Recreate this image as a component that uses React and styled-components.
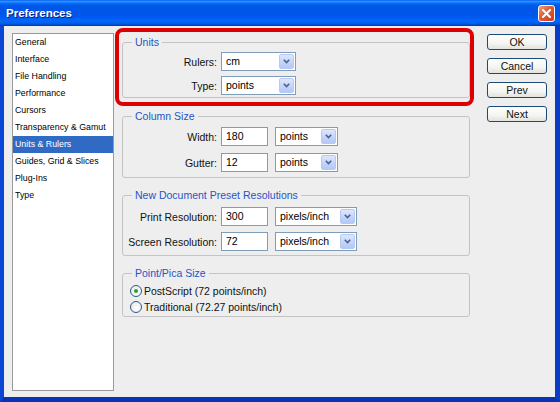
import styled, { createGlobalStyle } from 'styled-components';

const GlobalStyle = createGlobalStyle`
  html, body {
    margin: 0;
    padding: 0;
    background: #ffffff;
  }
  body {
    font-family: "Liberation Sans", Arial, sans-serif;
  }
`;

const Window = styled.div`
  width: 560px;
  height: 402px;
  display: flex;
  flex-direction: column;
  overflow: hidden;
`;

const TitleBar = styled.div`
  height: 26px;
  flex-shrink: 0;
  display: flex;
  align-items: center;
  justify-content: space-between;
  padding: 0 5px 0 6px;
  background: linear-gradient(
    to bottom,
    #0058ee 0%,
    #3593ff 5%,
    #1580ff 9%,
    #0465f2 15%,
    #0057e5 24%,
    #0055eb 56%,
    #005bf5 68%,
    #0367fb 80%,
    #0060ec 88%,
    #0050d2 94%,
    #003a9e 100%
  );
`;

const Title = styled.span`
  color: #ffffff;
  font-weight: bold;
  font-size: 11.5px;
  text-shadow: 1px 1px 0 #0a1f8f;
`;

const CloseButton = styled.div`
  width: 17px;
  height: 17px;
  box-sizing: border-box;
  border: 1px solid #ffffff;
  border-radius: 3px;
  background: linear-gradient(135deg, #f0a080 0%, #e2603a 40%, #cf3b17 100%);
  display: flex;
  align-items: center;
  justify-content: center;
`;

const Frame = styled.div`
  flex: 1;
  display: flex;
  border-left: 4px solid #0b47d6;
  border-right: 5px solid #0a3cc4;
  border-bottom: 5px solid #0833b4;
`;

const Body = styled.div`
  flex: 1;
  display: flex;
  align-items: flex-start;
  padding: 0 8px 6px 8px;
  background: #eeeeee;
`;

const Sidebar = styled.ul`
  list-style: none;
  margin: 7px 0 0 0;
  padding: 0;
  width: 102px;
  box-sizing: border-box;
  align-self: stretch;
  background: #ffffff;
  border: 1px solid #9a9a9a;
`;

const Item = styled.li`
  height: 17px;
  line-height: 17px;
  padding-left: 2px;
  font-size: 8.8px;
  white-space: nowrap;
  color: ${p => (p.$active ? '#ffffff' : '#000000')};
  background: ${p => (p.$active ? '#316ac5' : 'transparent')};
`;

const Main = styled.div`
  width: 348px;
  margin: 2px 0 0 8px;
  display: flex;
  flex-direction: column;
  gap: 11px;
`;

const Highlight = styled.div`
  margin: 0 -4px -7px -7px;
  padding: 4px 0 4px 3px;
  border: 4px solid #dc0000;
  border-radius: 8px;
`;

const Group = styled.fieldset`
  margin: 0;
  padding: 0;
  min-width: 0;
  border: 1px solid #c3c3c3;
  border-radius: 3px;
`;

const Legend = styled.legend`
  margin-left: 9px;
  padding: 0 3px;
  font-size: 10.5px;
  line-height: 12px;
  color: #1f55c8;
`;

const Rows = styled.div`
  display: flex;
  flex-direction: column;
  gap: ${p => p.$gap}px;
  padding: ${p => p.$pt}px 0 ${p => p.$pb}px 0;
`;

const Row = styled.div`
  display: flex;
  align-items: center;
  height: 19px;
`;

const Label = styled.span`
  width: 94px;
  padding-right: 4px;
  text-align: right;
  font-size: 10.5px;
  color: #111111;
  white-space: nowrap;
`;

const TextField = styled.div`
  width: 47px;
  height: 19px;
  box-sizing: border-box;
  border: 1px solid #7f9db9;
  background: #ffffff;
  padding-left: 4px;
  font-size: 10.5px;
  line-height: 17px;
  color: #000000;
`;

const SelectBox = styled.div`
  width: ${p => p.$w}px;
  height: 19px;
  box-sizing: border-box;
  margin-left: ${p => p.$ml || 0}px;
  border: 1px solid #7f9db9;
  background: #ffffff;
  display: flex;
  align-items: stretch;
  padding: 1px;
`;

const SelectValue = styled.span`
  flex: 1;
  padding-left: 3px;
  font-size: 10.5px;
  line-height: 15px;
  color: #000000;
  white-space: nowrap;
`;

const DropButton = styled.span`
  width: 15px;
  box-sizing: border-box;
  border: 1px solid #b7c9f3;
  border-radius: 2px;
  background: linear-gradient(to bottom, #dde7fd 0%, #c3d4fb 55%, #b4c8f6 100%);
  display: flex;
  align-items: center;
  justify-content: center;
`;

const RadioRow = styled.label`
  display: flex;
  align-items: center;
  height: 16px;
  padding-left: 7px;
  gap: 2px;
  font-size: 10.5px;
  color: #111111;
`;

const RadioCircle = styled.span`
  width: 12px;
  height: 12px;
  box-sizing: border-box;
  border-radius: 50%;
  border: 1px solid #2d5a8a;
  background: radial-gradient(circle at 60% 60%, #ffffff 0%, #ececec 70%, #d8d8d8 100%);
  display: flex;
  align-items: center;
  justify-content: center;
  &::after {
    content: '';
    width: 4px;
    height: 4px;
    border-radius: 50%;
    background: #22a52a;
    display: ${p => (p.$checked ? 'block' : 'none')};
  }
`;

const Buttons = styled.div`
  margin: 8px 0 0 17px;
  display: flex;
  flex-direction: column;
  gap: 8px;
`;

const Button = styled.div`
  width: 60px;
  height: 16px;
  box-sizing: border-box;
  border: 1px solid #1c4a78;
  border-radius: 3px;
  background: linear-gradient(to bottom, #ffffff 0%, #f4f4f0 60%, #e3e2dc 100%);
  font-size: 10.5px;
  line-height: 14px;
  text-align: center;
  color: #111111;
`;

const Chevron = () => (
  <svg width="7" height="5" viewBox="0 0 7 5">
    <path d="M0.8 0.8 L3.5 3.6 L6.2 0.8" fill="none" stroke="#4d6185" strokeWidth="1.6" />
  </svg>
);

const Select = ({ value, width, ml }) => (
  <SelectBox $w={width} $ml={ml}>
    <SelectValue>{value}</SelectValue>
    <DropButton>
      <Chevron />
    </DropButton>
  </SelectBox>
);

const sections = [
  'General',
  'Interface',
  'File Handling',
  'Performance',
  'Cursors',
  'Transparency & Gamut',
  'Units & Rulers',
  'Guides, Grid & Slices',
  'Plug-Ins',
  'Type',
];

const App = () => (
  <>
    <GlobalStyle />
    <Window>
      <TitleBar>
        <Title>Preferences</Title>
        <CloseButton>
          <svg width="9" height="9" viewBox="0 0 9 9">
            <path d="M1 1 L8 8 M8 1 L1 8" stroke="#ffffff" strokeWidth="2" strokeLinecap="square" />
          </svg>
        </CloseButton>
      </TitleBar>
      <Frame>
        <Body>
          <Sidebar>
            {sections.map(s => (
              <Item key={s} $active={s === 'Units & Rulers'}>
                {s}
              </Item>
            ))}
          </Sidebar>

          <Main>
            <Highlight>
              <Group>
                <Legend>Units</Legend>
                <Rows $gap={5} $pt={4} $pb={2}>
                  <Row>
                    <Label>Rulers:</Label>
                    <Select value="cm" width={75} />
                  </Row>
                  <Row>
                    <Label>Type:</Label>
                    <Select value="points" width={75} />
                  </Row>
                </Rows>
              </Group>
            </Highlight>

            <Group>
              <Legend>Column Size</Legend>
              <Rows $gap={7} $pt={5} $pb={5}>
                <Row>
                  <Label>Width:</Label>
                  <TextField>180</TextField>
                  <Select value="points" width={63} ml={7} />
                </Row>
                <Row>
                  <Label>Gutter:</Label>
                  <TextField>12</TextField>
                  <Select value="points" width={63} ml={7} />
                </Row>
              </Rows>
            </Group>

            <Group>
              <Legend>New Document Preset Resolutions</Legend>
              <Rows $gap={6} $pt={6} $pb={4}>
                <Row>
                  <Label>Print Resolution:</Label>
                  <TextField>300</TextField>
                  <Select value="pixels/inch" width={82} ml={7} />
                </Row>
                <Row>
                  <Label>Screen Resolution:</Label>
                  <TextField>72</TextField>
                  <Select value="pixels/inch" width={82} ml={7} />
                </Row>
              </Rows>
            </Group>

            <Group>
              <Legend>Point/Pica Size</Legend>
              <Rows $gap={0} $pt={4} $pb={1}>
                <RadioRow>
                  <RadioCircle $checked />
                  PostScript (72 points/inch)
                </RadioRow>
                <RadioRow>
                  <RadioCircle />
                  Traditional (72.27 points/inch)
                </RadioRow>
              </Rows>
            </Group>
          </Main>

          <Buttons>
            <Button>OK</Button>
            <Button>Cancel</Button>
            <Button>Prev</Button>
            <Button>Next</Button>
          </Buttons>
        </Body>
      </Frame>
    </Window>
  </>
);

export default App;
